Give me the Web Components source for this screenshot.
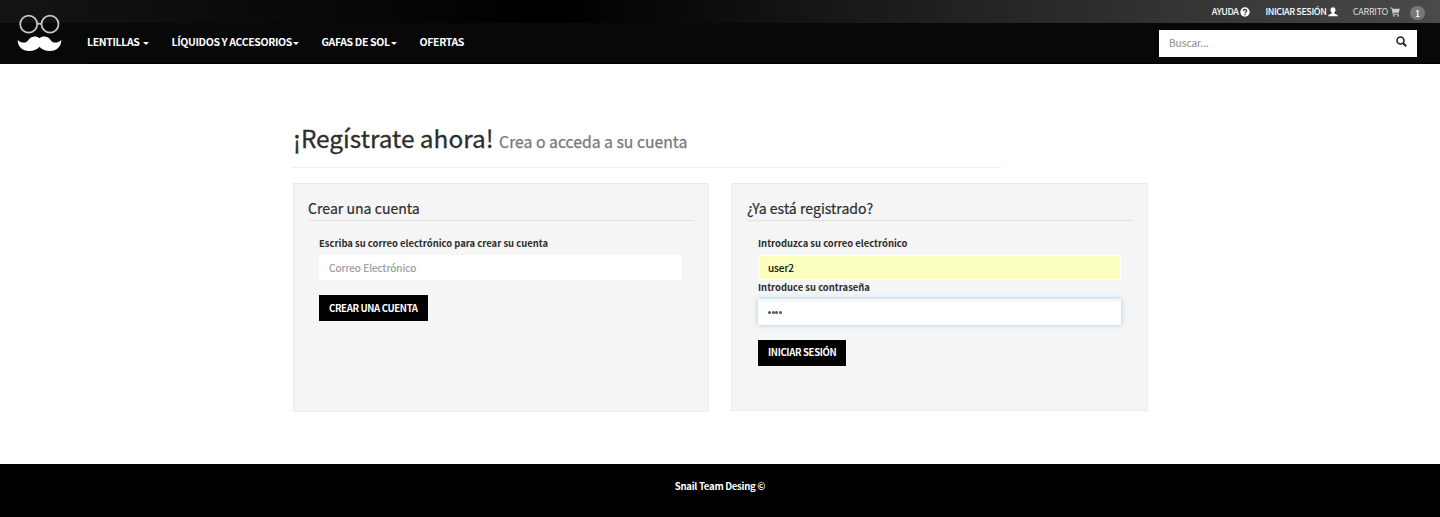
<!DOCTYPE html>
<html lang="es">
<head>
<meta charset="utf-8">
<title>Regístrate</title>
<style>
html,body{margin:0;height:517px;overflow:hidden;background:#fff}
body{font-family:"Noto Sans CJK SC","Open Sans",sans-serif;color:#2d2d2d;display:flex;flex-direction:column}
site-footer{margin-top:auto}
</style>
</head>
<body>
<site-header></site-header>
<register-page></register-page>
<site-footer>Snail Team Desing ©</site-footer>
<script>
const define=(name,html)=>customElements.define(name,class extends HTMLElement{
  constructor(){super();this.attachShadow({mode:'open'}).innerHTML=html;}
});

define('brand-logo',`<style>:host{display:block;width:46px;height:40px}svg{display:block}</style>
<svg width="46" height="40" viewBox="0 0 46 40">
<g fill="none" stroke="#c8c8c8" stroke-width="1.7"><circle cx="11.700" cy="10.200" r="8.500"/><circle cx="33" cy="10.200" r="8.500"/><path d="M20 10.200q2.400-1.300 4.700 0"/></g>
<path fill="#fff" d="M22.500 24.300C20 22 14.500 21.700 11.600 25.700C9.500 29 5 30 .7 26C.5 32.500 5.500 37 12 37C17 37 20.500 35 22.500 32.700C24.500 35 28 37 33 37C39.500 37 44.500 32.500 44.300 26C40 30 35.500 29 33.400 25.700C30.500 21.700 25 22 22.500 24.300Z"/></svg>`);

define('nav-item',`<style>
:host{display:flex;align-items:center;font-weight:700;font-size:10.5px;letter-spacing:-.37px;line-height:16px;color:#fff;white-space:nowrap}
i{display:none;width:0;height:0;border:3px solid transparent;border-top-color:#fff;border-bottom:0;margin:3px 0 0 var(--gap,1px)}
:host([caret]) i{display:block}</style><slot></slot><i></i>`);

define('top-link',`<style>
:host{display:flex;align-items:center;font-size:9px;font-weight:var(--w,500);letter-spacing:var(--ls,-.42px);line-height:14px;color:var(--c,#fff);white-space:nowrap;gap:2px}
</style><span><slot></slot></span><slot name="icon"></slot>`);

define('search-box',`<style>
:host{display:flex;box-sizing:border-box;width:258px;height:27px;background:#fff;padding:0 10px;align-items:center;justify-content:space-between;color:#999;font-size:10.05px;line-height:16px;-webkit-text-stroke:.2px #999}
svg{margin-top:-3px}</style><span>Buscar...</span>
<svg width="11" height="11" viewBox="0 0 11 11" fill="none" stroke="#222"><circle cx="4.500" cy="4.500" r="3.500" stroke-width="1.600"/><path d="M7.200 7.200l3 3" stroke-width="2"/></svg>`);

define('site-header',`<style>
:host{display:grid;grid-template:23px 41px / 87px 1fr;background:#080808}
.top{grid-column:1/3;grid-row:1;background:linear-gradient(90deg,#141414 0,#000 37.500%,#000 39%,#4a4a4a 100%);display:flex;justify-content:flex-end;align-items:center;padding-right:15px}
brand-logo{grid-column:1;grid-row:1/3;margin:14px 0 0 17px;z-index:1}
.main{box-sizing:border-box;height:41px;grid-column:2;grid-row:2;display:flex;align-items:center;padding:0 23px 2px 0;border-bottom:1px solid #000}
search-box{margin:2px 0 0 auto}
svg{display:block}
b{box-sizing:border-box;width:15px;height:14px;margin:3px 0 0 10px;border-radius:7px;background:#777;color:#fff;font:500 9px/16px "Noto Sans CJK SC",sans-serif;text-align:center}
</style>
<div class="top">
<top-link style="margin-right:15px">AYUDA<svg slot="icon" width="10" height="10" viewBox="0 0 10 10"><circle cx="5" cy="5" r="4.700" fill="#fff"/><path d="M3.400 4Q3.400 2.400 5 2.400T6.600 3.900Q6.600 4.600 5.800 5T5 6.200M5 6.900V8.200" fill="none" stroke="#333" stroke-width="1.300"/></svg></top-link>
<top-link style="margin-right:14.5px">INICIAR SESIÓN<svg slot="icon" width="10" height="10" viewBox="0 0 10 10"><path fill="#fff" d="M5 .3C6.700.3 7.500 1.500 7.500 3C7.500 4.300 7 5 6.300 5.600V6.600L9 7.700Q9.800 8 9.800 9.300H.2Q.2 8 1 7.700L3.700 6.600V5.600C3 5 2.500 4.300 2.500 3C2.500 1.500 3.300.3 5 .3Z"/></svg></top-link>
<top-link style="--c:#ddd;--w:400;--ls:-.28px">CARRITO<svg slot="icon" width="10" height="10" viewBox="0 0 10 10"><path d="M.3 1H2L3.200 7.200H8.800" fill="none" stroke="#ccc"/><path fill="#ccc" d="M2.200 1.700H9.800L8.800 5.700H3Z"/><circle cx="3.800" cy="8.800" r=".9" fill="#ccc"/><circle cx="8.200" cy="8.800" r=".9" fill="#ccc"/></svg></top-link>
<b>1</b></div>
<brand-logo></brand-logo>
<div class="main">
<nav-item caret style="--gap:4px;margin-right:22px">LENTILLAS</nav-item>
<nav-item caret style="margin-right:22.5px">LÍQUIDOS Y ACCESORIOS</nav-item>
<nav-item caret style="margin-right:23px">GAFAS DE SOL</nav-item>
<nav-item>OFERTAS</nav-item>
<search-box></search-box></div>`);

define('page-title',`<style>
:host{display:flex;align-items:baseline;box-sizing:border-box;width:708px;height:49px;border-bottom:1px solid #eee;font-size:24.400px;line-height:38px;white-space:nowrap;gap:5.500px;-webkit-text-stroke:.3px #2d2d2d}
small{font-size:15.750px;color:#777;-webkit-text-stroke:.25px #777}</style><span><slot></slot></span><small><slot name="sub"></slot></small>`);

define('form-panel',`<style>
:host{display:block;box-sizing:border-box;background:#f5f5f5;border:1px solid #ececec;padding:14px 14px 0 var(--pl,14px)}
h3{box-sizing:border-box;margin:0 0 14px;height:23px;border-bottom:1px solid #e3e3e3;font-weight:400;font-size:14.100px;line-height:21px;-webkit-text-stroke:.2px #2d2d2d}
div{padding:0 12px 0 11px}</style><h3><slot name="heading"></slot></h3><div><slot></slot></div>`);

define('form-field',`<style>
:host{display:block;font-size:9.430px}
label{display:block;font-weight:700;height:20px;line-height:16px;white-space:nowrap}
div{box-sizing:border-box;height:25px;padding:0 9px;border:1px solid #fff;background:#fff;color:#999;font-size:10.080px;line-height:23px;-webkit-text-stroke:.2px currentColor}
:host([filled]) div{background:#faffbd;color:#000}
:host([focused]) div{height:26px;color:#444;box-shadow:inset 0 1px 1px rgba(0,0,0,.06),0 0 5px rgba(102,175,233,.6);display:flex;align-items:center;gap:.6px}
</style><label><slot name="label"></slot></label><div><slot></slot></div>`);

define('action-button',`<style>
:host{display:block;box-sizing:border-box;width:max-content;height:26px;margin-top:15px;padding:0 10px;background:#000;color:#fff;font-size:9.600px;letter-spacing:-.36px;font-weight:700;line-height:26px;white-space:nowrap}
</style><slot></slot>`);

define('register-page',`<style>
:host{display:block;width:855px;margin:55px 0 0 293px}
.cols{display:grid;grid-template-columns:416px 417px;gap:22px;margin-top:15px;align-items:start}
.l{height:229px}.r{height:228px;--pl:15px}
.r action-button{line-height:25px}
form-field+form-field{margin-top:-1px}
i{width:3px;height:3px;border-radius:50%;background:#555}
</style>
<page-title>¡Regístrate ahora!<span slot="sub">Crea o acceda a su cuenta</span></page-title>
<div class="cols">
<form-panel class="l"><span slot="heading">Crear una cuenta</span>
<form-field><span slot="label">Escriba su correo electrónico para crear su cuenta</span>Correo Electrónico</form-field>
<action-button>CREAR UNA CUENTA</action-button></form-panel>
<form-panel class="r"><span slot="heading">¿Ya está registrado?</span>
<form-field filled><span slot="label">Introduzca su correo electrónico</span>user2</form-field>
<form-field focused><span slot="label">Introduce su contraseña</span><i></i><i></i><i></i><i></i></form-field>
<action-button>INICIAR SESIÓN</action-button></form-panel>
</div>`);

define('site-footer',`<style>
:host{display:block;height:53px;background:#000;color:#fff;text-align:center;font-size:9.600px;letter-spacing:-.29px;font-weight:700;line-height:45px}
</style><slot></slot>`);
</script>
</body>
</html>
